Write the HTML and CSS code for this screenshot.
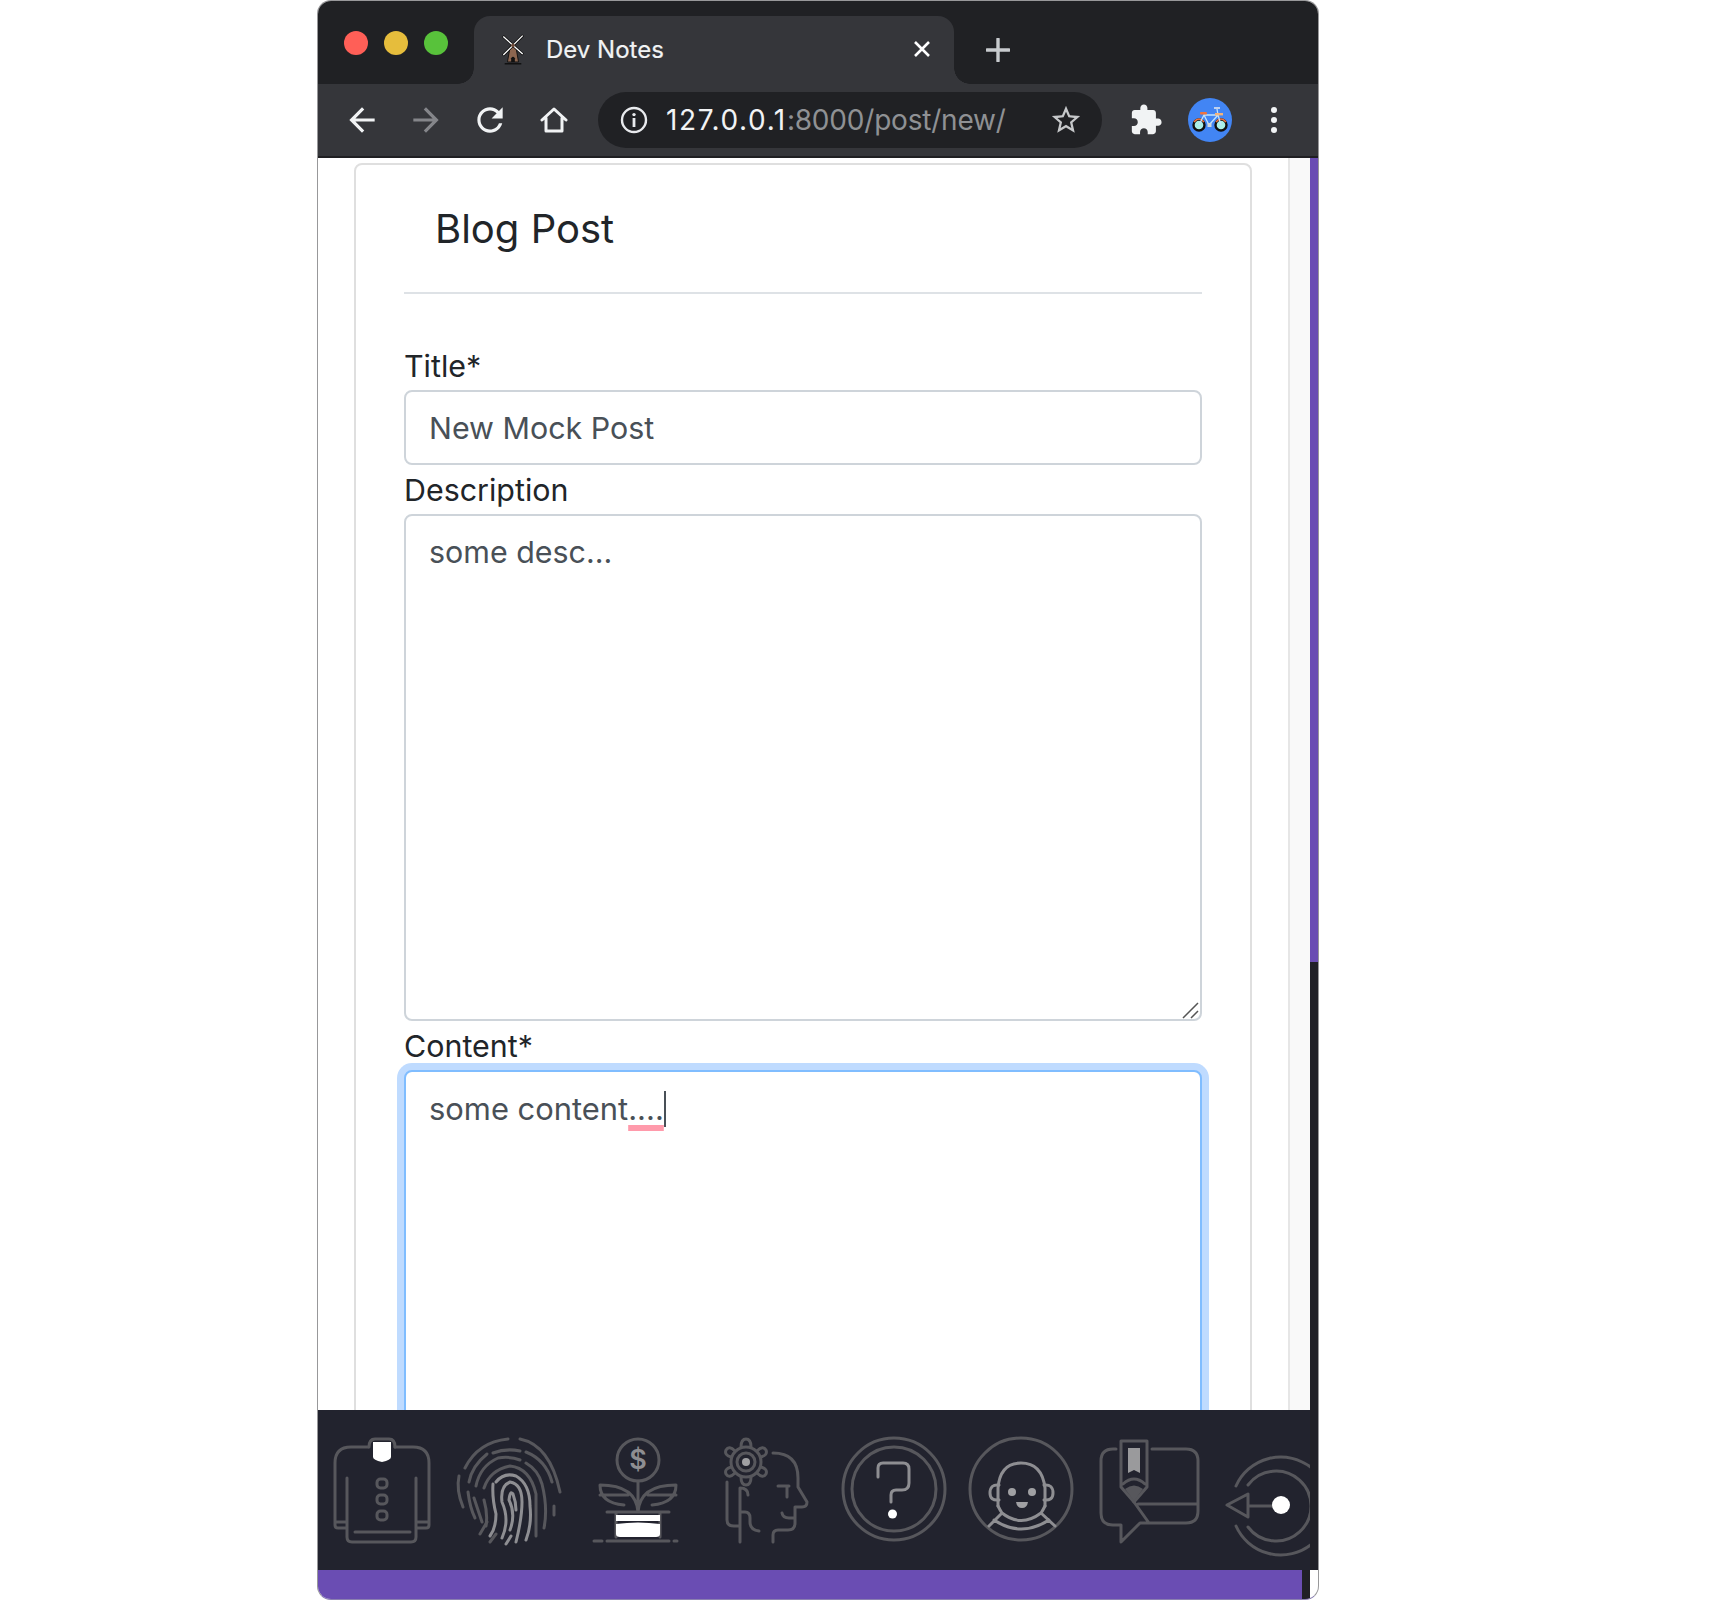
FILE: index.html
```html
<!DOCTYPE html>
<html lang="en">
<head>
<meta charset="utf-8">
<title>Dev Notes</title>
<link rel="stylesheet" href="styles.css">
</head>
<body>
<div class="window">
  <header class="tabstrip">
    <div class="lights"><i class="light red"></i><i class="light yellow"></i><i class="light green"></i></div>
    <div class="tab">
      <svg class="favicon" viewBox="0 0 26 34">
        <path d="M10 14 L16 14 L19 31 H7 Z" fill="#8c6650" stroke="#111" stroke-width="1"/>
        <path d="M11 31 V27 Q13 24 15 27 V31" fill="#111"/>
        <path d="M4 33 H22" stroke="#111" stroke-width="1.6"/>
        <path d="M2 3 L24 23 M24 2 L2 24" stroke="#111" stroke-width="3"/>
        <path d="M2.5 3.5 L23.5 22.5 M23.5 2.5 L2.5 23.5" stroke="#fff" stroke-width="1.4"/>
        <circle cx="13" cy="13" r="2" fill="#6e4c3a"/>
      </svg>
      <span class="tab-title">Dev Notes</span>
      <svg class="tab-close" viewBox="0 0 16 16"><path d="M1 1 L15 15 M15 1 L1 15"/></svg>
    </div>
    <svg class="newtab" viewBox="0 0 24 24"><path d="M12 1 V23 M1 12 H23"/></svg>
  </header>
  <nav class="toolbar">
    <svg class="tool back" viewBox="0 0 24 24"><path d="M20 11H7.83l5.59-5.59L12 4l-8 8 8 8 1.41-1.41L7.83 13H20v-2z"/></svg>
    <svg class="tool fwd" viewBox="0 0 24 24"><path d="M4 11h12.17l-5.59-5.59L12 4l8 8-8 8-1.41-1.41L16.17 13H4v-2z"/></svg>
    <svg class="tool reload" viewBox="0 0 24 24"><path d="M17.65 6.35C16.2 4.9 14.21 4 12 4c-4.42 0-7.99 3.58-7.99 8s3.57 8 7.99 8c3.73 0 6.84-2.55 7.73-6h-2.08c-.82 2.33-3.04 4-5.65 4-3.31 0-6-2.69-6-6s2.69-6 6-6c1.66 0 3.14.69 4.22 1.78L13 11h7V4l-2.35 2.35z"/></svg>
    <svg class="tool home" viewBox="0 0 28 28"><path d="M2 14 L14 3 L26 14 M6 12 V25 H22 V12" fill="none" stroke="#f1f3f4" stroke-width="3" stroke-linejoin="round" stroke-linecap="round"/></svg>
    <div class="omnibox">
      <svg class="info" viewBox="0 0 28 28"><circle cx="14" cy="14" r="12" fill="none" stroke="#e8eaed" stroke-width="2.4"/><circle cx="14" cy="8.6" r="1.7" fill="#e8eaed"/><rect x="12.6" y="12" width="2.8" height="9" fill="#e8eaed"/></svg>
      <span class="url"><b class="host">127.0.0.1</b>:8000/post/new/</span>
      <svg class="star" viewBox="0 0 24 24"><path d="M22 9.24l-7.19-.62L12 2 9.19 8.63 2 9.24l5.46 4.73L5.82 21 12 17.27 18.18 21l-1.63-7.03L22 9.24zM12 15.4l-3.76 2.27 1-4.28-3.32-2.88 4.38-.38L12 6.1l1.71 4.04 4.38.38-3.32 2.88 1 4.28L12 15.4z"/></svg>
    </div>
    <svg class="tool puzzle" viewBox="0 0 24 24"><path d="M20.5 11H19V7c0-1.1-.9-2-2-2h-4V3.5C13 2.12 11.88 1 10.5 1S8 2.12 8 3.5V5H4c-1.1 0-1.99.9-1.99 2v3.8H3.5c1.49 0 2.7 1.21 2.7 2.7s-1.21 2.7-2.7 2.7H2V20c0 1.1.9 2 2 2h3.8v-1.5c0-1.49 1.21-2.7 2.7-2.7 1.49 0 2.7 1.21 2.7 2.7V22H17c1.1 0 2-.9 2-2v-4h1.5c1.38 0 2.5-1.12 2.5-2.5S21.88 11 20.5 11z"/></svg>
    <svg class="avatar" viewBox="0 0 44 44">
      <circle cx="22" cy="22" r="22" fill="#4285f4"/>
      <circle cx="11" cy="27" r="5.5" fill="#a9efe6" stroke="#111" stroke-width="2.4"/>
      <circle cx="33" cy="27" r="5.5" fill="#a9efe6" stroke="#111" stroke-width="2.4"/>
      <path d="M6 24 Q11 18 16 24 M28 24 Q33 18 38 24" fill="none" stroke="#f0743e" stroke-width="1.6"/>
      <path d="M11 27 L16 17 H30 L33 27 M16 17 L21 27 L30 17 M30 17 L29 11" fill="none" stroke="#bfe3ff" stroke-width="1.3"/>
      <rect x="12" y="14" width="7" height="2.4" rx="1" fill="#f0743e"/>
      <rect x="27" y="15" width="8" height="2.4" fill="#f3b37a"/>
      <rect x="19.5" y="25" width="4" height="4" fill="#cfd8dc"/>
      <path d="M26 10 H32" stroke="#e8eaed" stroke-width="1.3"/>
    </svg>
    <div class="kebab"><i></i><i></i><i></i></div>
  </nav>
  <div class="body">
    <div class="column">
      <div class="viewport">
        <main class="page">
          <section class="card">
            <h1 class="heading">Blog Post</h1>
            <hr class="rule">
            <form class="form">
              <label class="label" for="f-title">Title*</label>
              <input class="field" id="f-title" type="text" value="New Mock Post" spellcheck="false">
              <label class="label" for="f-desc">Description</label>
              <textarea class="field area" id="f-desc" spellcheck="false">some desc...</textarea>
              <label class="label">Content*</label>
              <div class="field focused"><span>some content</span><span class="misspelt">....</span><i class="caret"></i></div>
            </form>
          </section>
        </main>
        <div class="gutter"></div>
      </div>
      <footer class="dock">
        <svg class="badge" viewBox="0 0 128 160">
          <path class="ln" d="M50 37 H33 Q17 37 17 53 V115 Q17 118 20 118 H29 M77 37 H95 Q111 37 111 53 V115 Q111 118 108 118 H98 M29 68 V127 Q29 132 34 132 H93 Q98 132 98 127 V68 M37 122 H92 M17 112 H29 M98 112 H111"/>
          <rect class="ln" x="59" y="69" width="10" height="9" rx="3.5"/>
          <rect class="ln" x="59" y="85" width="10" height="9" rx="3.5"/>
          <rect class="ln" x="59" y="101" width="10" height="9" rx="3.5"/>
          <path class="ln" d="M51 37 Q51 29 57 29 H71 Q77 29 77 37"/>
          <path fill="#fff" d="M55 32 H73 V47 Q73 50 64 52 Q55 50 55 47 Z"/>
        </svg>
        <svg class="badge" viewBox="0 0 128 160">
          <path class="ln" d="M19 58 Q32 32 62 29 M74 29 Q104 35 114 82"/>
          <path class="ln" d="M13 66 Q10 80 17 97"/>
          <path class="ln" d="M47 43 Q60 38 74 41 M80 42 Q100 50 106 72 M108 96 V105"/>
          <path class="ln" d="M23 72 Q26 56 41 44 M22 82 Q24 98 29 108"/>
          <path class="ln" d="M30 76 Q34 56 52 48 Q64 46 74 50 M80 53 Q92 60 96 74 Q102 98 98 118"/>
          <path class="ln" d="M28 88 Q32 100 36 112 M34 124 L41 112"/>
          <path class="ln" d="M38 78 Q44 60 64 56 Q84 58 90 84 V126 M38 90 Q42 104 40 116 M44 132 L50 124"/>
          <path class="mid" d="M47 74 Q46 88 50 104 Q50 118 44 126 M50 72 Q58 62 70 66 Q84 74 84 96 Q86 114 80 130"/>
          <path class="mid" d="M56 128 Q64 110 56 92 Q54 76 64 72 Q76 74 76 92 Q76 108 70 132"/>
          <path class="mid" d="M64 120 Q70 104 63 90 Q64 80 67 84 Q70 92 70 100"/>
          <path class="mid" d="M60 134 L65 126"/>
        </svg>
        <svg class="badge" viewBox="0 0 128 160">
          <circle class="ln" cx="64" cy="50" r="21"/>
          <text class="dollar" x="64" y="59">$</text>
          <path class="ln" d="M64 71 V102 M64 102 Q62 75 26 75 Q26 93 50 95 M26 85 H54 M64 102 Q66 75 102 75 Q102 93 78 95 M102 85 H74 M33 102 H95 M42 102 V127 M86 102 V127 M20 131 H28 M33 131 H95 M100 131 H103"/>
          <path fill="#fff" d="M42 105 H86 V111 H42 Z M42 114 Q64 111 86 114 V124 Q86 127 82 127 H46 Q42 127 42 124 Z"/>
        </svg>
        <svg class="badge" viewBox="0 0 128 160">
          <circle class="ln" cx="44" cy="52" r="15"/>
          <path class="ln" d="M39 37 Q39 29 44 29 Q49 29 49 37 M55 41 Q61 35 64 40 Q66 45 59 47 M59 57 Q66 59 64 64 Q61 69 55 63 M49 67 Q49 75 44 75 Q39 75 39 67 M33 63 Q27 69 24 64 Q22 59 29 57 M29 47 Q22 45 24 40 Q27 35 33 41"/>
          <circle class="ln" cx="44" cy="52" r="9"/>
          <circle fill="#a0a0a3" cx="44" cy="52" r="4"/>
          <path class="ln" d="M71 43 Q96 43 96 68 V77 L105 92 Q105 97 100 97 H93 V113 Q93 120 86 120 H76 Q71 120 71 125 V132 M76 76 H87 M85 76 V87 M80 103 Q81 108 87 108 H93 M25 72 V110 Q25 116 32 116 H38 M38 78 V132 M46 85 Q46 78 38 78 M38 102 H43 Q48 102 48 108 V112 Q48 120 57 121"/>
        </svg>
        <svg class="badge" viewBox="0 0 128 160">
          <circle class="ln" cx="64" cy="79" r="51"/>
          <circle class="ln" cx="64" cy="79" r="42"/>
          <path class="mid" d="M48 67 V58 Q48 53 53 53 H73 Q79 53 79 59 V73 Q79 80 72 80 H66 Q61 80 61 85 V92"/>
          <circle fill="#fff" cx="62.5" cy="104" r="4.5"/>
        </svg>
        <svg class="badge" viewBox="0 0 128 160">
          <circle class="ln" cx="63" cy="79" r="51"/>
          <path class="mid" d="M40 96 Q40 90 40 78 Q42 53 63 53 Q84 53 87 78 V96"/>
          <path class="mid" d="M41 75 Q32 74 32 83 Q32 91 41 90 M86 75 Q95 74 95 83 Q95 91 86 90"/>
          <circle fill="#a0a0a3" cx="54" cy="82" r="4"/>
          <circle fill="#a0a0a3" cx="74" cy="82" r="4"/>
          <path fill="#a0a0a3" d="M58 92 H70 Q69 98 64 98 Q59 98 58 92 Z"/>
          <path class="mid" d="M40 96 Q42 100 44 103 Q63 118 83 103 Q85 100 87 96 M44 103 L31 116 M83 103 L97 116 M36 110 Q63 128 91 110"/>
        </svg>
        <svg class="badge" viewBox="0 0 128 160">
          <path class="ln" d="M30 39 H27 Q15 39 15 51 V103 Q15 115 27 115 H35 V132 L54 113 H100 Q112 113 112 101 V51 Q112 39 100 39 H66 M52 94 H111 M48 92 L63 113"/>
          <path class="ln" d="M35 31 H61 V77 L48 92 L35 77 Z M37 74 Q48 64 59 74"/>
          <path fill="#57575c" d="M39 79 Q48 72 57 79 L48 91 Z"/>
          <path fill="#9a9a9c" d="M42 38 H54 V63 L48 60 L42 63 Z"/>
        </svg>
        <svg class="badge" viewBox="0 0 128 160">
          <path class="ln" d="M22 76 A49 49 0 1 1 22 116 M34 75 A35 35 0 1 1 34 117"/>
          <path class="ln" d="M34 84 V107 L13 95 Z M34 96 H60"/>
          <circle fill="#fff" cx="67" cy="95" r="9"/>
        </svg>
      </footer>
      <div class="statusbar"></div>
    </div>
    <div class="rail"><div class="rail-purple"></div><div class="rail-dark"></div></div>
  </div>
</div>
</body>
</html>
```
FILE: styles.css
```css
* { box-sizing: border-box; }
html, body { margin: 0; padding: 0; background: #fff; }
body { height: 1600px; overflow: hidden; font-family: Inter, "Liberation Sans", sans-serif; }

.window {
  width: 1002px;
  height: 1600px;
  margin-left: 317px;
  border: 1px solid #98989a;
  border-bottom-color: #8a7fb0;
  border-radius: 14px;
  overflow: hidden;
  display: flex;
  flex-direction: column;
  background: #fff;
}

/* tab strip */
.tabstrip {
  height: 83px;
  flex: none;
  background: #202124;
  display: flex;
  align-items: flex-end;
}
.lights { width: 156px; height: 83px; display: flex; gap: 16px; padding: 30px 0 0 26px; flex: none; }
.light { width: 24px; height: 24px; border-radius: 50%; }
.red { background: #ff5f57; }
.yellow { background: #e6bd3c; }
.green { background: #58c23b; }
.tab {
  position: relative;
  width: 480px;
  height: 68px;
  background: #35363a;
  border-radius: 16px 16px 0 0;
  display: flex;
  align-items: center;
  padding: 0 24px 2px 27px;
}
.tab::before, .tab::after {
  content: "";
  position: absolute;
  bottom: 0;
  width: 16px;
  height: 16px;
}
.tab::before { left: -16px; background: radial-gradient(circle at 0 0, transparent 15.5px, #35363a 16px); }
.tab::after { right: -16px; background: radial-gradient(circle at 100% 0, transparent 15.5px, #35363a 16px); }
.favicon { width: 24px; height: 32px; flex: none; }
.tab-title { margin-left: 21px; font-size: 24px; color: #f1f3f4; flex: 1; letter-spacing: 0; -webkit-text-stroke: .2px #f1f3f4; }
.tab-close { width: 16px; height: 16px; fill: none; stroke: #fff; stroke-width: 2.6; }
.newtab { width: 24px; height: 24px; margin: 0 0 22px 32px; fill: none; stroke: #c8cbce; stroke-width: 3.4; stroke-linecap: round; }

/* toolbar */
.toolbar {
  height: 74px;
  flex: none;
  background: #35363a;
  border-bottom: 2px solid #1f1f22;
  display: flex;
  align-items: center;
  padding-left: 25px;
}
.tool { flex: none; fill: #f1f3f4; }
.back, .fwd { width: 38px; height: 38px; margin-right: 26px; }
.fwd { fill: #85868a; }
.reload { width: 38px; height: 38px; margin-right: 31px; }
.home { width: 28px; height: 28px; margin-right: 30px; }
.omnibox {
  flex: none;
  width: 504px;
  height: 56px;
  border-radius: 28px;
  background: #202124;
  display: flex;
  align-items: center;
  padding-left: 22px;
}
.info { width: 28px; height: 28px; flex: none; }
.url { margin-left: 18px; font-size: 28px; letter-spacing: -.2px; color: #8f9194; font-family: Inter, sans-serif; white-space: nowrap; flex: 1; }
.host { font-weight: 400; color: #f1f3f4; letter-spacing: 1.6px; }
.star { width: 34px; height: 34px; fill: #c6c8ca; margin-right: 19px; flex: none; }
.puzzle { width: 34px; height: 34px; margin-left: 27px; }
.avatar { width: 44px; height: 44px; margin-left: 25px; flex: none; }
.kebab { margin-left: 39px; display: flex; flex-direction: column; gap: 4px; }
.kebab i { width: 6px; height: 6px; border-radius: 50%; background: #f1f3f4; }

/* layout */
.body { flex: 1; display: flex; min-height: 0; }
.column { width: 992px; flex: none; display: flex; flex-direction: column; }
.viewport { height: 1252px; flex: none; display: flex; overflow: hidden; }
.page { width: 972px; flex: none; padding: 5px 0 0 36px; border-right: 2px solid #e6e6e6; }
.gutter { flex: 1; background: #f9f9f9; }
.rail { width: 8px; flex: none; display: flex; flex-direction: column; }
.rail-purple { height: 804px; background: #6a4db3; }
.rail-dark { height: 608px; background: #202027; }

/* card */
.card {
  width: 898px;
  height: 1400px;
  border: 2px solid #dfdfdf;
  border-radius: 8px;
  padding: 0 48px;
}
.heading { margin: 0; padding: 37px 0 0 31px; height: 127px; font-size: 40px; line-height: 54px; font-weight: 400; color: #212529; }
.rule { margin: 0 0 47px; border: 0; height: 2px; background: #dee2e6; }
.form { display: flex; flex-direction: column; }
.label { display: block; font-size: 30.4px; line-height: 47px; padding-top: 2px; color: #212529; }
.field {
  display: block;
  width: 100%;
  height: 75px;
  padding: 1px 23px 0;
  margin: 0;
  border: 2px solid #ced4da;
  border-radius: 8px;
  background: #fff;
  color: #495057;
  font: 400 30.4px/48px Inter, sans-serif;
  outline: none;
}
.area {
  height: 507px;
  padding-top: 12px;
  resize: none;
  background: #fff url("data:image/svg+xml,%3Csvg xmlns='http://www.w3.org/2000/svg' width='17' height='17'%3E%3Cpath d='M1 16 L16 1 M9 16 L16 9' stroke='%23555' stroke-width='1.5' fill='none'/%3E%3C/svg%3E") no-repeat right 1px bottom 0;
}
.focused {
  height: 500px;
  padding-top: 13px;
  border-color: #80bdff;
  box-shadow: 0 0 0 7px #bfdbff;
  white-space: nowrap;
  font-size: 30.9px;
}
.misspelt {
  text-decoration: underline 6px #ff9aab;
  text-underline-offset: 5px;
  text-decoration-skip-ink: none;
}
.caret { display: inline-block; width: 2px; height: 36px; background: #495057; vertical-align: -7px; }

/* dock */
.dock { height: 160px; flex: none; background: #22232e; display: flex; overflow: hidden; }
.badge { width: 128px; height: 160px; flex: none; }
.ln { fill: none; stroke: #57575c; stroke-width: 3; stroke-linecap: round; stroke-linejoin: round; }
.mid { fill: none; stroke: #8e8e92; stroke-width: 3; stroke-linecap: round; stroke-linejoin: round; }
.dollar { font: 600 27px Inter, sans-serif; fill: #8e8e92; text-anchor: middle; }
.statusbar { flex: 1; background: #6a4db3; border-right: 8px solid #202027; }
```
